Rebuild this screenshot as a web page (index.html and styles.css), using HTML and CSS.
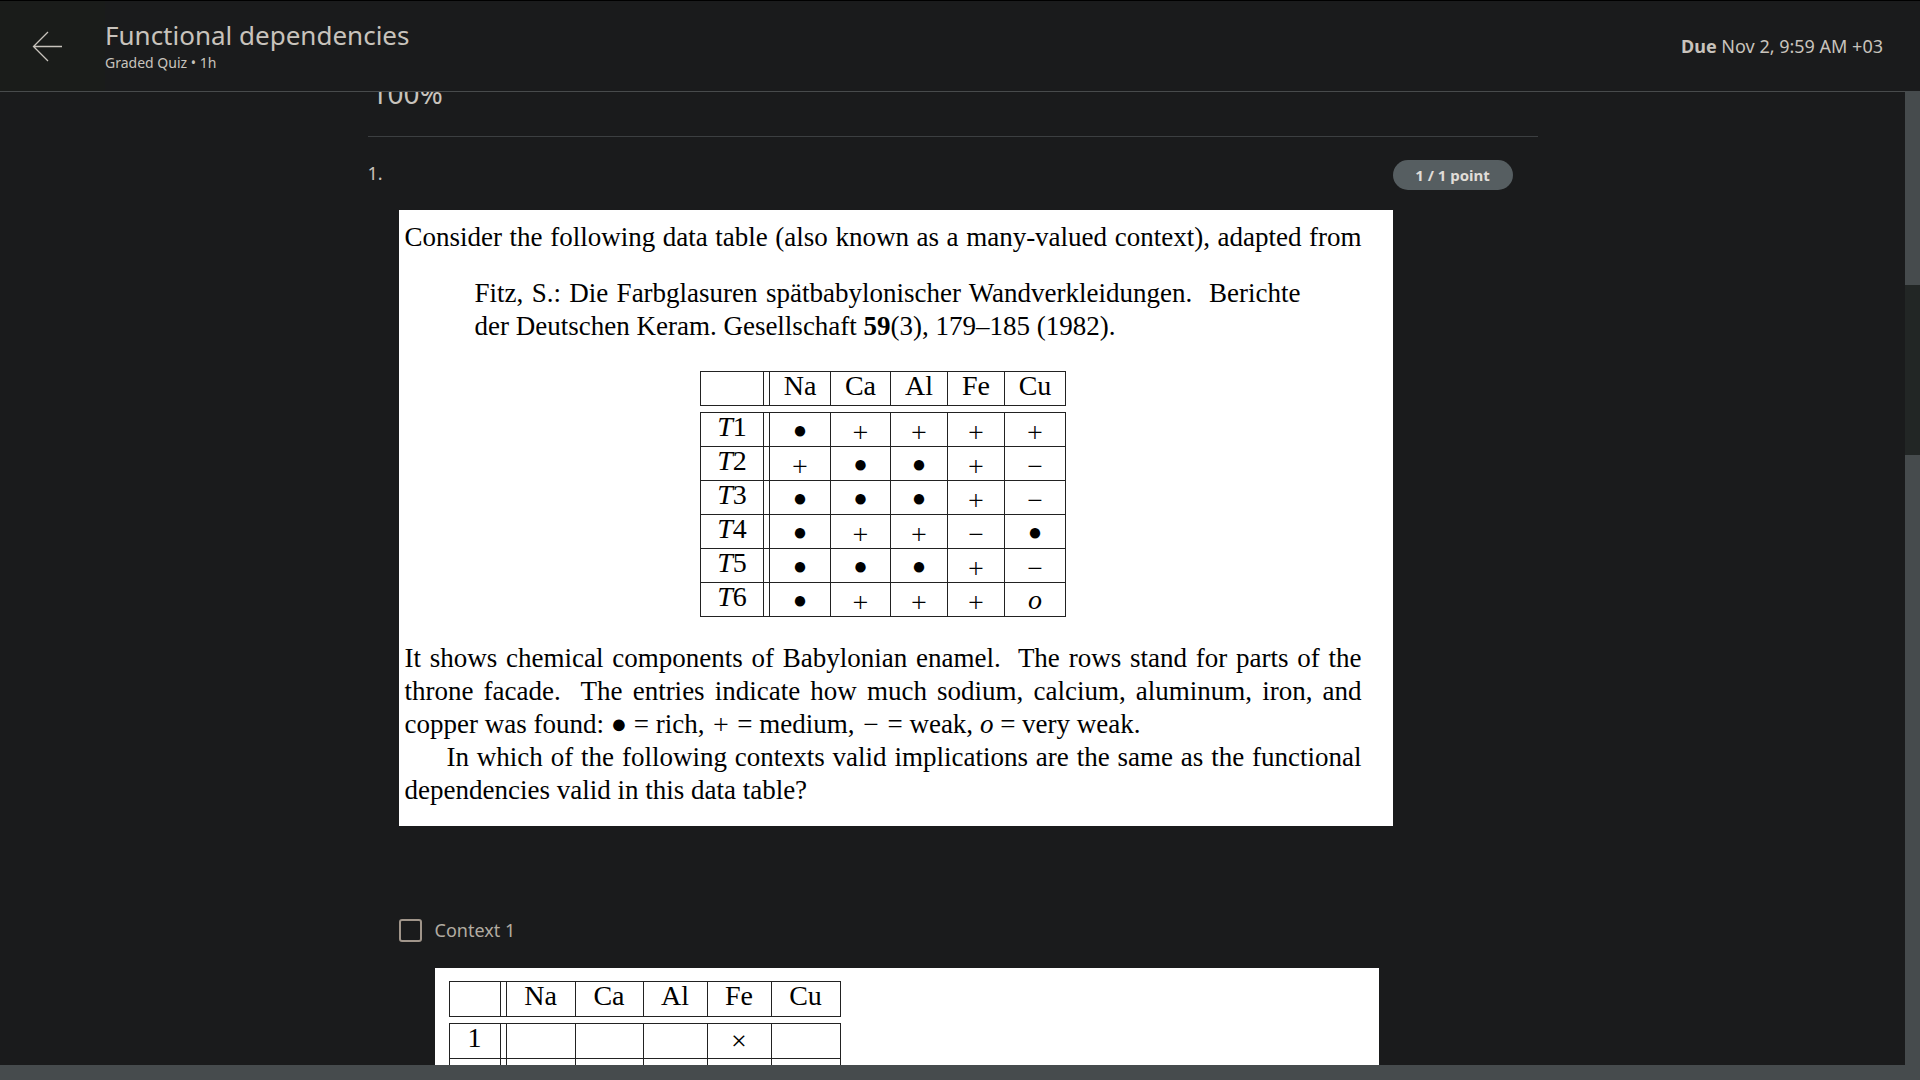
FILE: index.html
```html
<!DOCTYPE html>
<html lang="en">
<head>
<meta charset="utf-8">
<title>Functional dependencies</title>
<link rel="stylesheet" href="styles.css">
</head>
<body>
<header class="topbar">
  <button class="back" aria-label="Back">
    <svg width="31" height="31" viewBox="0 0 31 31" fill="none" stroke="currentColor" stroke-width="1.3"><path d="M1.5 15.5H30M16 1L1.5 15.5L16 30"/></svg>
  </button>
  <div class="heading">
    <h1>Functional dependencies</h1>
    <p>Graded Quiz • 1h</p>
  </div>
  <p class="due"><strong>Due</strong> Nov 2, 9:59 AM +03</p>
</header>
<div class="viewport">
  <main class="content">
    <div class="column">
      <p class="score">100%</p>
      <section class="question">
        <span class="number">1.</span>
        <div class="body">
          <article class="sheet">
            <p><span class="full">Consider the following data table (also known as a many-valued context), adapted from</span></p>
            <blockquote>
              <span class="full">Fitz, S.: Die Farbglasuren spätbabylonischer Wandverkleidungen.&nbsp; Berichte</span>
              <span class="line">der Deutschen Keram. Gesellschaft <b>59</b>(3), 179–185 (1982).</span>
            </blockquote>
            <table class="context data">
              <colgroup><col class="c-label"><col class="c-na"><col class="c-ca"><col class="c-al"><col class="c-fe"><col class="c-cu"></colgroup>
              <thead><tr><th></th><th>Na</th><th>Ca</th><th>Al</th><th>Fe</th><th>Cu</th></tr></thead>
              <tbody>
                <tr><th><i>T</i>1</th><td class="dot">●</td><td>+</td><td>+</td><td>+</td><td>+</td></tr>
                <tr><th><i>T</i>2</th><td>+</td><td class="dot">●</td><td class="dot">●</td><td>+</td><td>−</td></tr>
                <tr><th><i>T</i>3</th><td class="dot">●</td><td class="dot">●</td><td class="dot">●</td><td>+</td><td>−</td></tr>
                <tr><th><i>T</i>4</th><td class="dot">●</td><td>+</td><td>+</td><td>−</td><td class="dot">●</td></tr>
                <tr><th><i>T</i>5</th><td class="dot">●</td><td class="dot">●</td><td class="dot">●</td><td>+</td><td>−</td></tr>
                <tr><th><i>T</i>6</th><td class="dot">●</td><td>+</td><td>+</td><td>+</td><td class="letter">o</td></tr>
              </tbody>
            </table>
            <p>
              <span class="full">It shows chemical components of Babylonian enamel.&nbsp; The rows stand for parts of the</span>
              <span class="full">throne facade.&nbsp; The entries indicate how much sodium, calcium, aluminum, iron, and</span>
              <span class="line">copper was found: <span class="dot">●</span> = rich, <span class="sign">+</span> = medium, <span class="sign">−</span> = weak, <i>o</i> = very weak.</span>
            </p>
            <p>
              <span class="full indent">In which of the following contexts valid implications are the same as the functional</span>
              <span class="line">dependencies valid in this data table?</span>
            </p>
          </article>
          <label class="option"><input type="checkbox">Context 1</label>
          <div class="answer">
            <table class="context choice">
              <colgroup><col class="c-label"><col class="c-na"><col class="c-ca"><col class="c-al"><col class="c-fe"><col class="c-cu"></colgroup>
              <thead><tr><th></th><th>Na</th><th>Ca</th><th>Al</th><th>Fe</th><th>Cu</th></tr></thead>
              <tbody>
                <tr><th>1</th><td></td><td></td><td></td><td>×</td><td></td></tr>
                <tr><th></th><td></td><td></td><td></td><td></td><td></td></tr>
              </tbody>
            </table>
          </div>
        </div>
        <span class="points">1 / 1 point</span>
      </section>
    </div>
  </main>
  <div class="scrollbar"><div class="thumb"></div></div>
</div>
<div class="bottombar"></div>
</body>
</html>
```

FILE: styles.css
```css
* { box-sizing: border-box; }

body {
  margin: 0;
  height: 100vh;
  display: flex;
  flex-direction: column;
  overflow: hidden;
  background: #1a1b1c;
  color: #c8c3bc;
  font: 18px/26px "Noto Sans", sans-serif;
}

h1, p, blockquote { margin: 0; }

.topbar {
  flex: none;
  height: 91px;
  display: flex;
  align-items: center;
  border-top: 1px solid #000;
  padding-right: 37px;
}

.back {
  width: 105px;
  align-self: stretch;
  display: flex;
  align-items: center;
  padding: 0 0 0 32px;
  border: 0;
  background: #1a1c1a;
  color: #c8c3bc;
}

.heading { flex: 1; }
.heading h1 { font-size: 26px; line-height: 34px; font-weight: 400; }
.heading p { font-size: 14px; line-height: 22px; }
.due { white-space: nowrap; }

.viewport { flex: 1; min-height: 0; display: flex; }

.content {
  flex: 1;
  border-top: 1px solid #484b4c;
  overflow: hidden;
}

.column { max-width: 1170px; margin: 0 auto; }

.score {
  margin-top: -18px;
  padding: 0 4px 24px;
  border-bottom: 1px solid #3c3f41;
  font-size: 28px;
  line-height: 38px;
}

.question {
  display: grid;
  grid-template-columns: 31px 1fr 145px;
  padding-top: 23px;
}

.points {
  justify-self: start;
  align-self: start;
  width: 120px;
  border-radius: 15px;
  background: #565e61;
  color: #e0ddd8;
  font-size: 15px;
  font-weight: 700;
  line-height: 30px;
  text-align: center;
}

.body { padding-top: 50px; }

.sheet, .answer {
  background: #fff;
  color: #000;
  font-family: "Liberation Serif", serif;
}

.sheet {
  padding: 11px 31px 19px 6px;
  font-size: 27px;
  line-height: 33px;
}

.sheet blockquote { margin: 23px 61px 28px 70px; }

.full, .line { display: block; white-space: nowrap; }
.full { text-align: justify; text-align-last: justify; white-space: normal; }
.indent { padding-left: 42px; }
.sign { font: 200 30px/20px Inter, sans-serif; }

.context {
  table-layout: fixed;
  border-spacing: 0;
  text-align: center;
}

.context th, .context td {
  height: 34px;
  padding: 0;
  border-left: 1px solid #222;
  border-bottom: 1px solid #222;
  font-weight: 400;
  line-height: 28px;
}

.context th:last-child, .context td:last-child { border-right: 1px solid #222; }
.context tr:first-child > * { height: 35px; border-top: 1px solid #222; }
.context tbody::before { content: ""; display: block; height: 6px; }
.context tr > :first-child {
  padding-right: 6px;
  background: linear-gradient(#222, #222) right 5px top / 1px 100% no-repeat;
}
.context thead th, .context tbody th { vertical-align: top; }

.data { width: 366px; margin: 0 auto 25px; font-size: 28px; }
.data td { font: 200 30px/28px Inter, sans-serif; }
.data .dot { font: 24px/28px "Liberation Serif", serif; }
.data .letter { font: italic 28px/28px "Liberation Serif", serif; }
.data .c-label { width: 69px; }
.data .c-na { width: 61px; }
.data .c-ca { width: 60px; }
.data .c-al { width: 57px; }
.data .c-fe { width: 57px; }
.data .c-cu { width: 62px; }

.option {
  display: flex;
  align-items: center;
  gap: 13px;
  margin: 91px 0 25px;
  color: #b2aca2;
}

.option input {
  appearance: none;
  width: 23px;
  height: 23px;
  margin: 0;
  border: 2px solid #a0958a;
  border-radius: 3px;
}

.answer { margin: 0 14px 0 36px; padding: 13px 14px; }
.choice { width: 392px; font-size: 28px; }
.choice th, .choice td, .choice tr:first-child > * { height: 36px; }
.choice .c-label { width: 57px; }
.choice .c-na { width: 69px; }
.choice .c-ca { width: 68px; }
.choice .c-al { width: 64px; }
.choice .c-fe { width: 64px; }
.choice .c-cu { width: 70px; }

.scrollbar {
  flex: none;
  width: 15px;
  padding-top: 194px;
  background: #464b4d;
}
.thumb { height: 170px; background: #222625; }

.bottombar { flex: none; height: 15px; background: #464b4d; }
```
